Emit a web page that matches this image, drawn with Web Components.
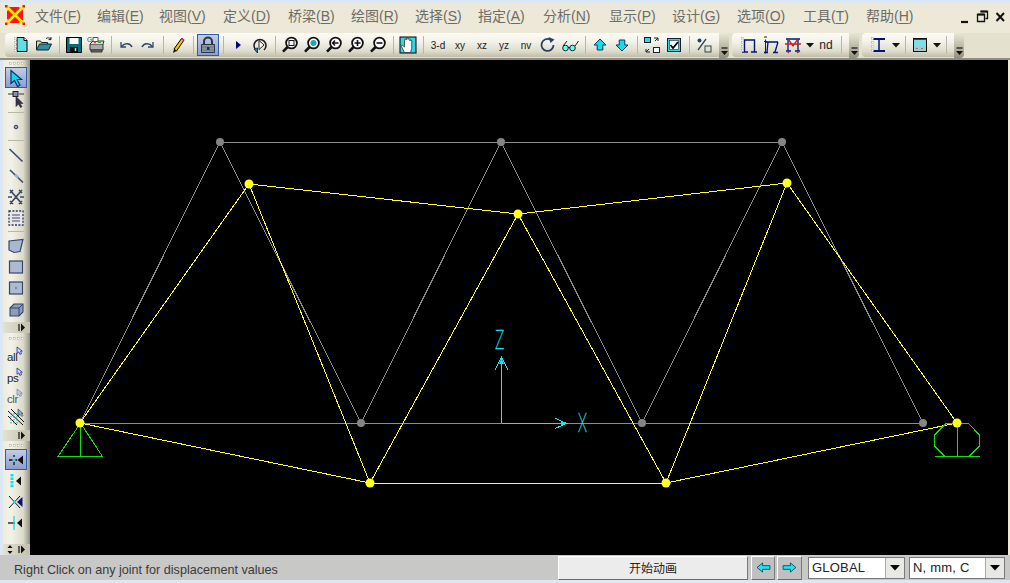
<!DOCTYPE html>
<html lang="zh"><head><meta charset="utf-8"><title>SAP2000</title>
<style>
html,body{margin:0;padding:0;background:#dbe8f3;width:1010px;height:583px;overflow:hidden}
</style></head>
<body>
<cad-app>
  <menu-bar slot="menu">
    <menu-item w="62" label="文件" k="F"></menu-item><menu-item w="62" label="编辑" k="E"></menu-item><menu-item w="64" label="视图" k="V"></menu-item><menu-item w="65" label="定义" k="D"></menu-item><menu-item w="63" label="桥梁" k="B"></menu-item><menu-item w="64" label="绘图" k="R"></menu-item><menu-item w="63" label="选择" k="S"></menu-item><menu-item w="65" label="指定" k="A"></menu-item><menu-item w="66" label="分析" k="N"></menu-item><menu-item w="63" label="显示" k="P"></menu-item><menu-item w="65" label="设计" k="G"></menu-item><menu-item w="66" label="选项" k="O"></menu-item><menu-item w="63" label="工具" k="T"></menu-item><menu-item w="62" label="帮助" k="H"></menu-item>
  </menu-bar>
  <tool-strip slot="tools">
    <tool-bar>
      <tool-btn i="new"></tool-btn><tool-btn i="open"></tool-btn><tool-sep></tool-sep>
      <tool-btn i="save"></tool-btn><tool-btn i="print"></tool-btn><tool-sep></tool-sep>
      <tool-btn i="undo"></tool-btn><tool-btn i="redo"></tool-btn><tool-sep></tool-sep>
      <tool-btn i="pencil"></tool-btn><tool-sep></tool-sep>
      <tool-btn i="lock" active></tool-btn><tool-sep></tool-sep>
      <tool-btn i="play"></tool-btn><tool-btn i="replay"></tool-btn><tool-sep></tool-sep>
      <tool-btn i="zwin"></tool-btn><tool-btn i="zfit"></tool-btn><tool-btn i="zprev"></tool-btn><tool-btn i="zin"></tool-btn><tool-btn i="zout"></tool-btn><tool-sep></tool-sep>
      <tool-btn i="hand"></tool-btn><tool-sep></tool-sep>
      <tool-btn>3-d</tool-btn><tool-btn>xy</tool-btn><tool-btn>xz</tool-btn><tool-btn>yz</tool-btn><tool-btn>nv</tool-btn><tool-btn i="rot"></tool-btn><tool-btn i="glasses"></tool-btn><tool-sep></tool-sep>
      <tool-btn i="up"></tool-btn><tool-btn i="down"></tool-btn><tool-sep></tool-sep>
      <tool-btn i="fit"></tool-btn><tool-btn i="check"></tool-btn><tool-sep></tool-sep>
      <tool-btn i="pct"></tool-btn>
    </tool-bar>
    <tool-bar>
      <tool-btn i="frame"></tool-btn><tool-btn i="frame2"></tool-btn><tool-btn i="frame3"></tool-btn><tool-drop></tool-drop><tool-btn big>nd</tool-btn><tool-sep></tool-sep>
    </tool-bar>
    <tool-bar>
      <tool-btn i="ibeam"></tool-btn><tool-drop></tool-drop><tool-sep></tool-sep>
      <tool-btn i="panel"></tool-btn><tool-drop></tool-drop><tool-sep></tool-sep>
    </tool-bar>
  </tool-strip>
  <side-bar slot="side">
    <side-group h="273">
      <tool-btn v i="cursor" active></tool-btn><tool-btn v i="pick"></tool-btn><tool-sep v></tool-sep>
      <tool-btn v i="dot"></tool-btn><tool-sep v></tool-sep>
      <tool-btn v i="line"></tool-btn><tool-btn v i="line2"></tool-btn><tool-btn v i="xbrace"></tool-btn><tool-btn v i="dash"></tool-btn><tool-sep v></tool-sep>
      <tool-btn v i="quad"></tool-btn><tool-btn v i="rect"></tool-btn><tool-btn v i="rect2"></tool-btn><tool-btn v i="solid"></tool-btn>
    </side-group>
    <side-group h="108" g="10">
      <tool-btn v sel>all</tool-btn><tool-btn v sel>ps</tool-btn><tool-btn v sel dim>clr</tool-btn><tool-btn v i="hatch"></tool-btn>
    </side-group>
    <side-group h="114" g="8" updown>
      <tool-btn v i="s1" active></tool-btn><tool-btn v i="s2"></tool-btn><tool-btn v i="s3"></tool-btn><tool-btn v i="s4"></tool-btn>
    </side-group>
  </side-bar>
  <truss-view slot="view"></truss-view>
  <status-bar slot="status">
    <span slot="msg">Right Click on any joint for displacement values</span>
    <status-btn wide>开始动画</status-btn>
    <status-btn arrow="l"></status-btn>
    <status-btn arrow="r"></status-btn>
    <status-combo w="97" g="4">GLOBAL</status-combo>
    <status-combo w="96" g="3">N, mm, C</status-combo>
  </status-bar>
</cad-app>
<script>
const ZOOM=(inner)=>`<circle cx="10.5" cy="7" r="5.4" fill="#fff" stroke="#111" stroke-width="1.8"/><path d="M6.6 11 2 15.6" stroke="#111" stroke-width="2.6"/>${inner}`;
const ICONS={
new:`<path d="M4 1.5h7l3 3v11H4z" fill="#5fe0e6" stroke="#000"/><path d="M11 1.5v3h3" fill="#fff" stroke="#000"/>`,
open:`<path d="M1.5 14V5h4l1 1.5h6V8" fill="#e8d890" stroke="#123"/><path d="M1.5 14l3-6h12l-3 6z" fill="#2f8f9f" stroke="#123"/><path d="M11 2.5c2-1.2 3.5-.8 5 .8M16 1v2.6h-2.4" fill="none" stroke="#123"/>`,
save:`<path d="M1.5 1.5h15v15h-15z" fill="#0a6a76" stroke="#000"/><path d="M4.5 2h9v6h-9z" fill="#fff"/><path d="M5 11h8v5H5z" fill="#111"/><path d="M10.5 12v3" stroke="#7fd" stroke-width="1.5"/>`,
print:`<path d="M3 8h13v6H3z" fill="#aaa" stroke="#333"/><path d="M3 8l3-3h11l-1 3" fill="#ddd" stroke="#333"/><path d="M4 14h11v2H4z" fill="#777" stroke="#333"/><path d="M6 1.5h5v4H6z" fill="#fff" stroke="#555"/><circle cx="8" cy="6.5" r="1" fill="#e33"/><path d="M11 6.5h3" stroke="#2a2"/><text x="0" y="6" font-size="7" font-family="Liberation Sans" fill="#444">G</text>`,
undo:`<path d="M4 6v5h5" fill="none" stroke="#33476b" stroke-width="1.3"/><path d="M4.5 10.5C8 6.5 13 7 15 11" fill="none" stroke="#33476b" stroke-width="1.6"/>`,
redo:`<path d="M14 6v5H9" fill="none" stroke="#33476b" stroke-width="1.3"/><path d="M13.5 10.5C10 6.5 5 7 3 11" fill="none" stroke="#33476b" stroke-width="1.6"/>`,
pencil:`<path d="M5 13 12.5 2.5l2.4 1.8L7.5 15z" fill="#f4c400" stroke="#000"/><path d="M12.5 2.5l2.4 1.8" stroke="#c33" stroke-width="2"/><path d="M5 13l-1 4 3.5-2z" fill="#111"/>`,
lock:`<path d="M5 9V5.5a4 4 0 0 1 8 0V9" fill="none" stroke="#2b3540" stroke-width="2"/><path d="M2.5 8.5h13v8h-13z" fill="#8a97a8" stroke="#2b3540"/><path d="M2.5 11h13M2.5 14h13" stroke="#5c6878" stroke-width=".7"/><path d="M8 11h2.5v3H8z" fill="#16324f"/>`,
play:`<path d="M7 5l5 4-5 4z" fill="#00008b"/>`,
replay:`<path d="M5 14A6 6 0 1 1 13 14" fill="none" stroke="#222" stroke-width="1.6"/><path d="M8 4.500l5 4.500-5 4.500z" fill="#fff" stroke="#222"/><path d="M3 13l3.500-1v5z" fill="#3a78c0" stroke="#234"/>`,
zwin:ZOOM(`<rect x="8" y="4.500" width="5" height="5" fill="none" stroke="#111"/>`),
zfit:ZOOM(`<circle cx="10.500" cy="7" r="3" fill="#18a7b8"/>`),
zprev:ZOOM(`<path d="M7.500 7h6M10 4.500 7.500 7l2.500 2.500" fill="none" stroke="#111" stroke-width="1.4"/>`),
zin:ZOOM(`<path d="M7.500 7h6M10.500 4v6" stroke="#111" stroke-width="1.6"/>`),
zout:ZOOM(`<path d="M7.500 7h6" stroke="#111" stroke-width="1.600"/>`),
hand:`<rect x="1" y="1" width="16" height="16" fill="#35d5e5" stroke="#000"/><path d="M5.500 16.500 2.500 10.500c-.5-1.500 1-1.800 2-.5l1 1.200V4c0-1.300 1.800-1.300 1.800 0V3c0-1.300 1.800-1.300 1.800 0v.5c0-1.200 1.800-1.200 1.800 0V5c0-1.200 1.800-1.200 1.800 0v7.500l-1.200 4z" fill="#fff" stroke="#000" stroke-width=".6"/>`,
rot:`<path d="M14.500 9A6 6 0 1 1 11 3.500" fill="none" stroke="#2b3f66" stroke-width="1.800"/><path d="M9.500 1l6 2.500-4 3.500z" fill="#2b3f66"/>`,
glasses:`<circle cx="4.500" cy="12" r="2.800" fill="#6fe" stroke="#123"/><circle cx="11.500" cy="12" r="2.800" fill="#6fe" stroke="#123"/><path d="M7 11.500h2M2 10l4-5M14 10l3.500-5" fill="none" stroke="#123"/>`,
up:`<path d="M9 3l6 6h-3.200v5H6.200V9H3z" fill="#19dbe8" stroke="#0b3a5c"/>`,
down:`<path d="M9 15l6-6h-3.200V4H6.200v5H3z" fill="#19dbe8" stroke="#0b3a5c"/>`,
fit:`<rect x="1.500" y="1.500" width="6" height="5" fill="#35d5e5" stroke="#123"/><rect x="10.500" y="11.500" width="6" height="5" fill="#fff" stroke="#123"/><path d="M11 2l4 0M15 2v3M15 2l-3 3M7 16H3M3 16v-3M3 16l3-3" fill="none" stroke="#123"/>`,
check:`<rect x="2.500" y="2.500" width="13" height="13" fill="#35d5e5" stroke="#123"/><rect x="4.500" y="4.500" width="9" height="9" fill="#fff" stroke="#123" stroke-width=".6"/><path d="M5.500 9l2.500 3 5-6" fill="none" stroke="#000" stroke-width="1.800"/>`,
pct:`<path d="M3 14 11 3" stroke="#345" stroke-width="1.300"/><circle cx="4.500" cy="4.500" r="2" fill="#246"/><rect x="10" y="10" width="6" height="6" fill="none" stroke="#345"/>`,
frame:`<path d="M2 16h6M11 16h6M4.500 16V4h10v12" fill="none" stroke="#00147a" stroke-width="1.400"/>`,
frame2:`<path d="M3.500 3.500v14M2 1h3M2 5.500h3" fill="none" stroke="#222"/><path d="M3 6h13M2 16.500h4M11 16.500h5M5 16 6 6M13 16l3-10" fill="none" stroke="#00147a" stroke-width="1.300"/>`,
frame3:`<path d="M2 3h14M2 15h5M11 15h5M4 3v12M14 3v12" fill="none" stroke="#00147a" stroke-width="1.300"/><path d="M4 3l5 7 5-7M1 8h16M5 17l-2-2M13 17l3-2" fill="none" stroke="#c02020" stroke-width="1.300"/>`,
ibeam:`<path d="M3 3h12M3 15h12" stroke="#00147a" stroke-width="2"/><path d="M9 3v12" stroke="#00147a" stroke-width="1.500"/>`,
panel:`<rect x="2.500" y="2.500" width="13" height="13" fill="#7fdfe8" stroke="#111"/><path d="M2.500 3.500h13M5 12.500h2M10 12.500h2" stroke="#a11" stroke-width="1"/><path d="M3 10h12v5H3z" fill="#bbb" opacity=".5"/>`,
cursor:`<path d="M4 1.500v13l3.500-3 3 6 2.500-1.200-3-5.800h4.500z" fill="#14d8ea" stroke="#0d2f6e" stroke-width="1.200"/>`,
pick:`<path d="M1 4h5M12 4h5" stroke="#334" stroke-width="1"/><rect x="6" y="1.500" width="5" height="5" fill="#7f8fb0" stroke="#223"/><path d="M9 6.500v10l2.500-2.500 2 3.500 1.500-.8-2-3.200h3z" fill="#334" stroke="#223" stroke-width=".6"/>`,
dot:`<circle cx="9" cy="9" r="1.800" fill="#9aa8c0" stroke="#2f3f60"/>`,
line:`<path d="M2.500 3l13 12.500" stroke="#3b4a6b" stroke-width="1.600"/>`,
line2:`<path d="M3 3l13 12.500" stroke="#3b4a6b" stroke-width="1.600"/><path d="M8.200 7.500l3 3" stroke="#9db0d0" stroke-width="2.400"/>`,
xbrace:`<path d="M3 2l12 14M15 2 3 16M3 5l3-3M12 2l3 3M3 13l3 3M12 16l3-3M1 9h4M13 9h4" stroke="#3b4a6b" stroke-width="1.700" fill="none"/>`,
dash:`<rect x="2" y="2" width="14" height="14" fill="#e8e8ec" stroke="#28385c" stroke-width="1.300" stroke-dasharray="2 1.400"/><path d="M5 6h8M5 9h8M5 12h8" stroke="#3b4a6b"/>`,
quad:`<path d="M2 4l14-1.500-3 12-6 1L2 13z" fill="#a8b8d0" stroke="#33476b" stroke-width="1.200"/>`,
rect:`<rect x="2.500" y="3" width="13" height="12" fill="#aebad0" stroke="#33476b" stroke-width="1.200"/>`,
rect2:`<rect x="2.500" y="3" width="13" height="12" fill="#aebad0" stroke="#33476b" stroke-width="1.200"/><circle cx="9" cy="9" r="1.300" fill="#7d8fb2"/>`,
solid:`<path d="M3 8l4-4h9v8l-4 4H3z" fill="#8a9dbd" stroke="#33476b" stroke-width="1.100"/><path d="M3 8h9v8M12 8l4-4" fill="none" stroke="#33476b"/>`,
hatch:`<path d="M1 3l15 14M4 1l13 13M1 8l9 9" stroke="#111" stroke-width="1"/><path d="M4 5v12M7 5v12M10 5v12" stroke="#0aa" stroke-dasharray="1.500 1.500"/><path d="M11 1v7l2-1.500 2 2 1-1-1.500-2H16z" fill="#8ab" stroke="#336" stroke-width=".6"/>`,
s1:`<path d="M2 9h3.500M8 9h2" stroke="#111" stroke-width="1.300"/><path d="M7 4v2M7 11v3" stroke="#111" stroke-width="1.300"/><rect x="6" y="8" width="2.500" height="2.500" fill="#19dbe8"/><path d="M16 4.500v9L10.500 9z" fill="#111"/>`,
s2:`<path d="M5 2v14" stroke="#19dbe8" stroke-width="3" stroke-dasharray="2.500 1"/><path d="M14 4.500v9L9 9z" fill="#111"/>`,
s3:`<path d="M2 3l11 12M2 15 13 3" stroke="#111" stroke-width="1"/><circle cx="7.500" cy="9" r="1.500" fill="#19dbe8"/><path d="M15.500 4v10L10 9z" fill="#00147a"/>`,
s4:`<path d="M1 9h7" stroke="#111" stroke-width="1.300"/><path d="M7 2v14" stroke="#19dbe8" stroke-width="1.300"/><path d="M15 4.500v9L10 9z" fill="#111"/>`
};
const svg=(name,size=18)=>`<svg width="${size}" height="${size}" viewBox="0 0 18 18" aria-hidden="true">${ICONS[name]||''}</svg>`;
function def(name,html,init){customElements.define(name,class extends HTMLElement{
  constructor(){super();this.attachShadow({mode:'open'});}
  connectedCallback(){this.shadowRoot.innerHTML=typeof html==='function'?html(this):html;if(init)init(this);}
});}
const GRIP=`<svg width="3" height="18" aria-hidden="true"><g fill="#fff" stroke="#a9a793" stroke-width=".5"><rect x=".5" y="1.500" width="2" height="2"/><rect x=".5" y="5.500" width="2" height="2"/><rect x=".5" y="9.500" width="2" height="2"/><rect x=".5" y="13.500" width="2" height="2"/></g></svg>`;
const GRIPH=`<svg width="18" height="3" aria-hidden="true"><g fill="#fff" stroke="#a9a793" stroke-width=".5"><rect x="1.500" y=".5" width="2" height="2"/><rect x="5.500" y=".5" width="2" height="2"/><rect x="9.500" y=".5" width="2" height="2"/><rect x="13.500" y=".5" width="2" height="2"/></g></svg>`;

def('cad-app',`<style>
:host{display:grid;width:1010px;height:583px;grid-template-columns:30px 978px 2px;grid-template-rows:3px 30px 27px 495px 25px 3px;font-family:"Liberation Sans","Noto Sans CJK SC",sans-serif}
.m{grid-column:1/4;grid-row:2}.t{grid-column:1/4;grid-row:3}.s{grid-column:1;grid-row:4}.v{grid-column:2;grid-row:4;background:#000}.st{grid-column:1/4;grid-row:5}
.e{grid-column:3;grid-row:4;background:#ece9d8}
</style><div class="m"><slot name="menu"></slot></div><div class="t"><slot name="tools"></slot></div><div class="s"><slot name="side"></slot></div><div class="v"><slot name="view"></slot></div><div class="e"></div><div class="st"><slot name="status"></slot></div>`);

def('menu-bar',`<style>
:host{display:flex;align-items:center;height:30px;background:#ece9d8;padding-left:5px;box-sizing:border-box}
.logo{width:20px;height:20px;margin:-6px 10px 0 0;flex:none}
.items{display:flex;margin-top:-4px}
.win{margin-left:auto;display:flex;gap:3px;margin-right:2px;margin-top:-3px}
</style>
<svg class="logo" viewBox="0 0 20 20" aria-hidden="true"><path d="M4 2h12l2 2v12l-2 2H4l-2-2V4z" fill="#f01818"/><path d="M1 1l18 18M19 1 1 19" stroke="#ffec00" stroke-width="2.600"/><path d="M2 5.500 5.500 2M14.500 2 18 5.500M2 14.500 5.500 18M14.500 18 18 14.500" stroke="#ffec00" stroke-width="1.300" stroke-dasharray="1.500 1"/><path d="M0 0h2.500v2.500H0zM17.500 0H20v2.500h-2.500zM0 17.500h2.500V20H0zM17.500 17.500H20V20h-2.500z" fill="#f01818"/></svg>
<div class="items"><slot></slot></div>
<div class="win">
<svg width="15" height="14" viewBox="0 0 15 14" aria-hidden="true"><path d="M4 12h7" stroke="#111" stroke-width="2.200"/></svg>
<svg width="15" height="14" viewBox="0 0 15 14" aria-hidden="true"><path d="M5.500 1.500h7v7h-2M2.500 4.500h7v7h-7z" fill="none" stroke="#111" stroke-width="1.300"/><path d="M5.500 1.500h7M2.500 4.500h7" stroke="#111" stroke-width="2"/></svg>
<svg width="15" height="14" viewBox="0 0 15 14" aria-hidden="true"><path d="M3.500 3l7.500 8M11 3l-7.500 8" stroke="#111" stroke-width="2"/></svg>
</div>`);

def('menu-item',h=>`<style>
:host{display:block;width:${h.getAttribute('w')}px;font-size:14px;line-height:20px;color:#6c6c68;white-space:nowrap}
u{text-underline-offset:2px}
</style>${h.getAttribute('label')}(<u>${h.getAttribute('k')}</u>)`);

def('tool-strip',`<style>:host{display:flex;height:27px;padding-left:5px;gap:4px;background:#e4e1cf;box-sizing:border-box;border-bottom:2px solid #8f8e80}</style><slot></slot>`);

def('tool-bar',`<style>
:host{display:flex;align-items:flex-start;height:25px;margin-right:-1px}
.body{display:flex;align-items:center;height:24px;padding:0 4px 0 9px;border-radius:4px 0 0 4px;background:linear-gradient(#fbfaf5 0%,#f4f3ea 35%,#dedccb 75%,#bfbdaa 100%)}
.g{display:flex;margin-right:-6px;position:relative;z-index:1}
.ch{width:10px;height:25px;display:flex;align-items:flex-end;justify-content:center;border-radius:0 4px 4px 0;background:linear-gradient(#e8e6d6,#bcbaa6 55%,#8f8e80)}
</style><div class="body"><span class="g">${GRIP}</span><slot></slot></div>
<div class="ch"><svg width="9" height="12" viewBox="0 0 9 12" aria-hidden="true"><path d="M1.500 2h6" stroke="#111" stroke-width="1.200"/><path d="M1 5h7L4.500 9z" fill="#111"/></svg></div>`);

def('tool-btn',h=>{
 const v=h.hasAttribute('v'),act=h.hasAttribute('active'),sel=h.hasAttribute('sel');
 const w=v?'100%':'22px',ht=v?'21px':'22px';
 const ic=h.getAttribute('i');
 return `<style>
:host{display:flex;align-items:center;justify-content:${sel?'flex-start':'center'};width:${w};height:${ht};box-sizing:border-box;flex:none;
 font-size:${h.hasAttribute('big')?12:sel?11.5:10}px;${sel?'letter-spacing:-.4px;':''}color:${h.hasAttribute('dim')?'#555':'#222'};position:relative;
 ${act?'background:linear-gradient(#c6cfe6,#8a9ccc);outline:1px solid #2f5cb0;outline-offset:-1px;':''}}
 .s{position:absolute;right:4px;top:3px}
 .t{margin:${sel?'6px 0 0 2px':'0'}}
</style>${ic?svg(ic):`<span class="t"><slot></slot></span>`}${sel?`<svg class="s" width="7" height="9" viewBox="0 0 10 12" aria-hidden="true"><path d="M1.500 1v9l2.500-2 1.500 3.500L8 10.500 6.500 7H9z" fill="${h.hasAttribute('dim')?'#c0cce0':'#d0d8ff'}" stroke="${h.hasAttribute('dim')?'#7f90b8':'#2030c0'}" stroke-width="1.200"/></svg>`:''}`;
});

def('tool-sep',h=>h.hasAttribute('v')
 ?`<style>:host{display:flex;align-items:center;height:7px;flex:none;padding:0 3px}i{display:block;width:100%;height:1px;background:#b8b6a6}</style><i></i>`
 :`<style>:host{display:flex;justify-content:center;width:8px;height:18px;flex:none}i{display:block;width:1px;height:100%;background:#b8b6a6}</style><i></i>`);

def('tool-drop',`<style>:host{display:flex;align-items:center;justify-content:center;width:11px;height:22px}</style><svg width="8" height="5" viewBox="0 0 8 5" aria-hidden="true"><path d="M0 0h8L4 4.500z" fill="#111"/></svg>`);

def('side-bar',`<style>:host{display:flex;flex-direction:column;height:495px;padding-left:3px;box-sizing:border-box;background:#dbe8f3}</style><slot></slot>`);

def('side-group',h=>{
 const H=h.getAttribute('h'),g=h.getAttribute('g')||7;
 return `<style>
:host{display:flex;flex-direction:column;height:${H}px;width:27px;box-sizing:border-box;background:linear-gradient(90deg,#ecebdd,#f3f2e8 30%,#dcdac8 75%,#a9a89a 92%,#8f8e84)}
.g{height:${g}px;display:flex;align-items:center;justify-content:center;flex:none}
.b{display:flex;flex-direction:column;padding-right:3px;box-sizing:border-box;flex:1;padding-left:2px}
.ch{height:11px;flex:none;display:flex;align-items:center;justify-content:flex-end;gap:5px;padding-right:5px;background:linear-gradient(90deg,#e3e1d1,#c2c0ae);box-sizing:border-box}
</style><div class="g">${GRIPH}</div><div class="b"><slot></slot></div>
<div class="ch">${h.hasAttribute('updown')?`<svg width="6" height="9" viewBox="0 0 6 9" aria-hidden="true"><path d="M3 0 .5 3h5zM3 9 .5 6h5z" fill="#111"/></svg>`:''}<svg width="7" height="9" viewBox="0 0 7 9" aria-hidden="true"><path d="M1 1v7" stroke="#111" stroke-width="1.200"/><path d="M3 .5 7 4.500 3 8.500z" fill="#111"/></svg></div>`;
});

def('truss-view',`<style>:host{display:block;width:978px;height:495px}svg{display:block}text{font-family:Roboto,"Liberation Sans",sans-serif;font-weight:100;fill:#19e6f0;stroke:#19e6f0;stroke-width:.4}</style>
<svg id="s" width="978" height="495" viewBox="30 60 978 495"></svg>`,h=>{
 const s=h.shadowRoot.getElementById('s');
 const G=[[220,142],[501,142],[782,142],[361,423],[642,423],[923,423]];
 const gl=[[80,423,923,423],[220,142,782,142],[80,423,220,142],[220,142,361,423],[361,423,501,142],[501,142,642,423],[642,423,782,142],[782,142,923,423]];
 const Y={a:[80,423],b:[249,184],c:[518,214],d:[787,183],e:[370,483],f:[666,483],g:[957,423]};
 const yl=['ab','bc','cd','ae','ef','fg','be','ec','cf','fd','dg'];
 let o='';
 gl.forEach(l=>o+=`<line x1="${l[0]}" y1="${l[1]}" x2="${l[2]}" y2="${l[3]}" stroke="#8c8c8c" shape-rendering="crispEdges"/>`);
 G.forEach(p=>o+=`<circle cx="${p[0]}" cy="${p[1]}" r="4" fill="#858585"/>`);
 yl.forEach(k=>{const a=Y[k[0]],b=Y[k[1]];o+=`<line x1="${a[0]}" y1="${a[1]}" x2="${b[0]}" y2="${b[1]}" stroke="#ffff20" shape-rendering="crispEdges"/>`;});
 o+=`<g fill="none" stroke="#10e010" shape-rendering="crispEdges"><path d="M80.500 423 58 456.500h44.500zM80.500 423v33"/><path d="M946 423.500h22.500l11 11.500v11l-10.500 10.500M946 423.500l-11.500 11.500v11l10.500 10.500M935 456.500h45M957.500 423v33"/></g>`;
 Object.values(Y).forEach(p=>o+=`<circle cx="${p[0]}" cy="${p[1]}" r="4.500" fill="#ffff20"/>`);
 o+=`<g fill="none" stroke="#19e6f0" shape-rendering="crispEdges"><path d="M501.500 423v-66M495 370l6.500-13 6.500 13M501.500 423h65M555 418l11.500 5.500-11.500 5"/></g><path d="M501.500 358l-2.500 6h5zM567 423.500l-6-2.500v5z" fill="#19e6f0"/>`;
 o+=`<text x="495" y="349" font-size="25" textLength="9.500" lengthAdjust="spacingAndGlyphs">Z</text><text x="578" y="432" font-size="25" textLength="9" lengthAdjust="spacingAndGlyphs">X</text>`;
 s.innerHTML=o;
});

def('status-bar',`<style>
:host{display:flex;align-items:center;height:25px;background:#c8c8c6;font-size:12.6px;color:#3a3a3a;padding-left:14px;box-sizing:border-box}
.m{flex:none;width:544px;padding-top:5px}
.r{display:flex;align-items:center;height:25px}
</style><div class="m"><slot name="msg"></slot></div><div class="r"><slot></slot></div>`);

def('status-btn',h=>{
 const wide=h.hasAttribute('wide'),a=h.getAttribute('arrow');
 return `<style>
:host{display:flex;align-items:center;justify-content:center;box-sizing:border-box;height:24px;width:${wide?190:a==='l'?24:25}px;background:${wide?'#ececec':'#c0c0c0'};
 border:1px solid;border-color:#fff #7a7a7a #6a6a6a #fff;font:12px "Noto Sans CJK SC",sans-serif;color:#222;margin-right:${wide?3:a==='l'?2:6}px}
</style>${a?`<svg width="15" height="11" viewBox="0 0 16 12" aria-hidden="true"><path d="${a==='l'?'M1 6l6-5v3h8v4H7v3z':'M15 6 9 1v3H1v4h8v3z'}" fill="#19e6f0" stroke="#0d3b55" stroke-width=".9"/></svg>`:'<slot></slot>'}`;
});

def('status-combo',h=>`<style>
:host{display:flex;align-items:center;box-sizing:border-box;height:22px;width:${h.getAttribute('w')}px;background:#fff;border:1px solid #7a7a7a;font-size:13px;color:#222;padding-left:3px;margin-right:${h.getAttribute('g')}px;letter-spacing:.2px}
span{flex:1;white-space:nowrap}
b{display:flex;align-items:center;justify-content:center;width:18px;height:20px;background:#e8e8e4;border-left:1px solid #aaa}
</style><span><slot></slot></span><b><svg width="10" height="6" viewBox="0 0 10 6" aria-hidden="true"><path d="M0 0h10L5 5.500z" fill="#000"/></svg></b>`);
</script>
</body></html>
